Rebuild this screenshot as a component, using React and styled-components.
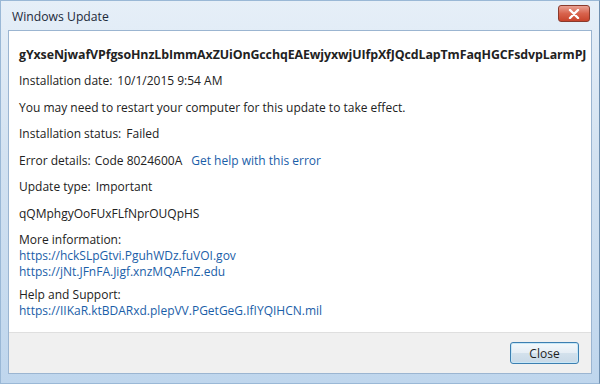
import React from 'react'
import styled, { createGlobalStyle } from 'styled-components'

const GlobalStyle = createGlobalStyle`
  html, body {
    margin: 0;
    padding: 0;
    background: #fff;
  }
  body {
    font-family: "Open Sans", "Liberation Sans", sans-serif;
  }
`

const Window = styled.div`
  width: 600px;
  height: 384px;
  box-sizing: border-box;
  display: flex;
  flex-direction: column;
  background: linear-gradient(180deg, #e6eff8 0%, #d3e2f1 40%, #bfd6ed 100%);
  border: 1px solid #9ab8d6;
  border-right-color: #6e8fb0;
  padding: 0 7px 9px 7px;
`

const TitleBar = styled.div`
  height: 29px;
  display: flex;
  align-items: center;
  justify-content: space-between;
  padding: 0 2px 0 4px;
`

const Title = styled.div`
  font-family: "Open Sans", "Liberation Sans", sans-serif;
  font-size: 12.2px;
  color: #1d2a3a;
  margin-top: 2px;
`

const CloseX = styled.div`
  width: 32px;
  height: 17px;
  margin-top: -4px;
  box-sizing: border-box;
  border: 1px solid #8a3a2c;
  border-radius: 3px;
  background: linear-gradient(180deg, #eaa193 0%, #d8634d 50%, #c8442c 100%);
  display: flex;
  align-items: center;
  justify-content: center;
`

const Body = styled.div`
  flex: 1;
  display: flex;
  flex-direction: column;
  border: 1px solid #9bb5d1;
  background: #fff;
`

const Content = styled.div`
  flex: 1;
  padding: 14px 10px 0 10px;
  display: flex;
  flex-direction: column;
  font-size: 12px;
  color: #222;
`

const Heading = styled.div`
  font-weight: 700;
  font-size: 12.4px;
  height: 26px;
  line-height: 20px;
  white-space: nowrap;
  letter-spacing: -0.1px;
`

const Line = styled.div`
  height: ${p => p.$h || 26.5}px;
  line-height: 20px;
  display: flex;
  gap: ${p => p.$gap || 5}px;
  white-space: nowrap;
`

const Group = styled.div`
  display: flex;
  flex-direction: column;
  margin-bottom: ${p => p.$mb || 0}px;
`

const Row = styled.div`
  line-height: 16px;
  white-space: nowrap;
`

const Link = styled.a`
  color: #1a5ea8;
  text-decoration: none;
  line-height: 16px;
  white-space: nowrap;
`

const HelpLink = styled(Link)`
  margin-left: 5px;
  line-height: 20px;
`

const Footer = styled.div`
  height: 40px;
  background: #f0f0f0;
  border-top: 1px solid #dfdfdf;
  display: flex;
  align-items: center;
  justify-content: flex-end;
  padding-right: 12px;
`

const Button = styled.button`
  width: 69px;
  height: 22px;
  font-family: "Open Sans", "Liberation Sans", sans-serif;
  font-size: 12px;
  color: #1e1e1e;
  border: 1px solid #3c7fb1;
  border-radius: 3px;
  background: linear-gradient(180deg, #f4f9fc 0%, #e6eef5 48%, #d3e1ec 52%, #c8d9e7 100%);
  box-shadow: inset 0 0 0 1px #c7e7f7;
  padding: 0;
`

export default function App() {
  return (
    <>
      <GlobalStyle />
      <Window>
        <TitleBar>
          <Title>Windows Update</Title>
          <CloseX>
            <svg width="12" height="10" viewBox="0 0 12 10">
              <path d="M2 1 L10 9 M10 1 L2 9" stroke="#fff" strokeWidth="2.4" strokeLinecap="round" />
            </svg>
          </CloseX>
        </TitleBar>
        <Body>
          <Content>
            <Heading>gYxseNjwafVPfgsoHnzLbImmAxZUiOnGcchqEAEwjyxwjUIfpXfJQcdLapTmFaqHGCFsdvpLarmPJ</Heading>
            <Line><span>Installation date:</span><span>10/1/2015 9:54 AM</span></Line>
            <Line>You may need to restart your computer for this update to take effect.</Line>
            <Line><span>Installation status:</span><span>Failed</span></Line>
            <Line $gap={4}>
              <span>Error details:</span>
              <span>Code 8024600A</span>
              <HelpLink href="#">Get help with this error</HelpLink>
            </Line>
            <Line><span>Update type:</span><span>Important</span></Line>
            <Line $h={28}>qQMphgyOoFUxFLfNprOUQpHS</Line>
            <Group $mb={7}>
              <Row>More information:</Row>
              <Link href="#">https://hckSLpGtvi.PguhWDz.fuVOI.gov</Link>
              <Link href="#">https://jNt.JFnFA.Jigf.xnzMQAFnZ.edu</Link>
            </Group>
            <Group>
              <Row>Help and Support:</Row>
              <Link href="#">https://IIKaR.ktBDARxd.plepVV.PGetGeG.IfIYQIHCN.mil</Link>
            </Group>
          </Content>
          <Footer>
            <Button>Close</Button>
          </Footer>
        </Body>
      </Window>
    </>
  )
}
